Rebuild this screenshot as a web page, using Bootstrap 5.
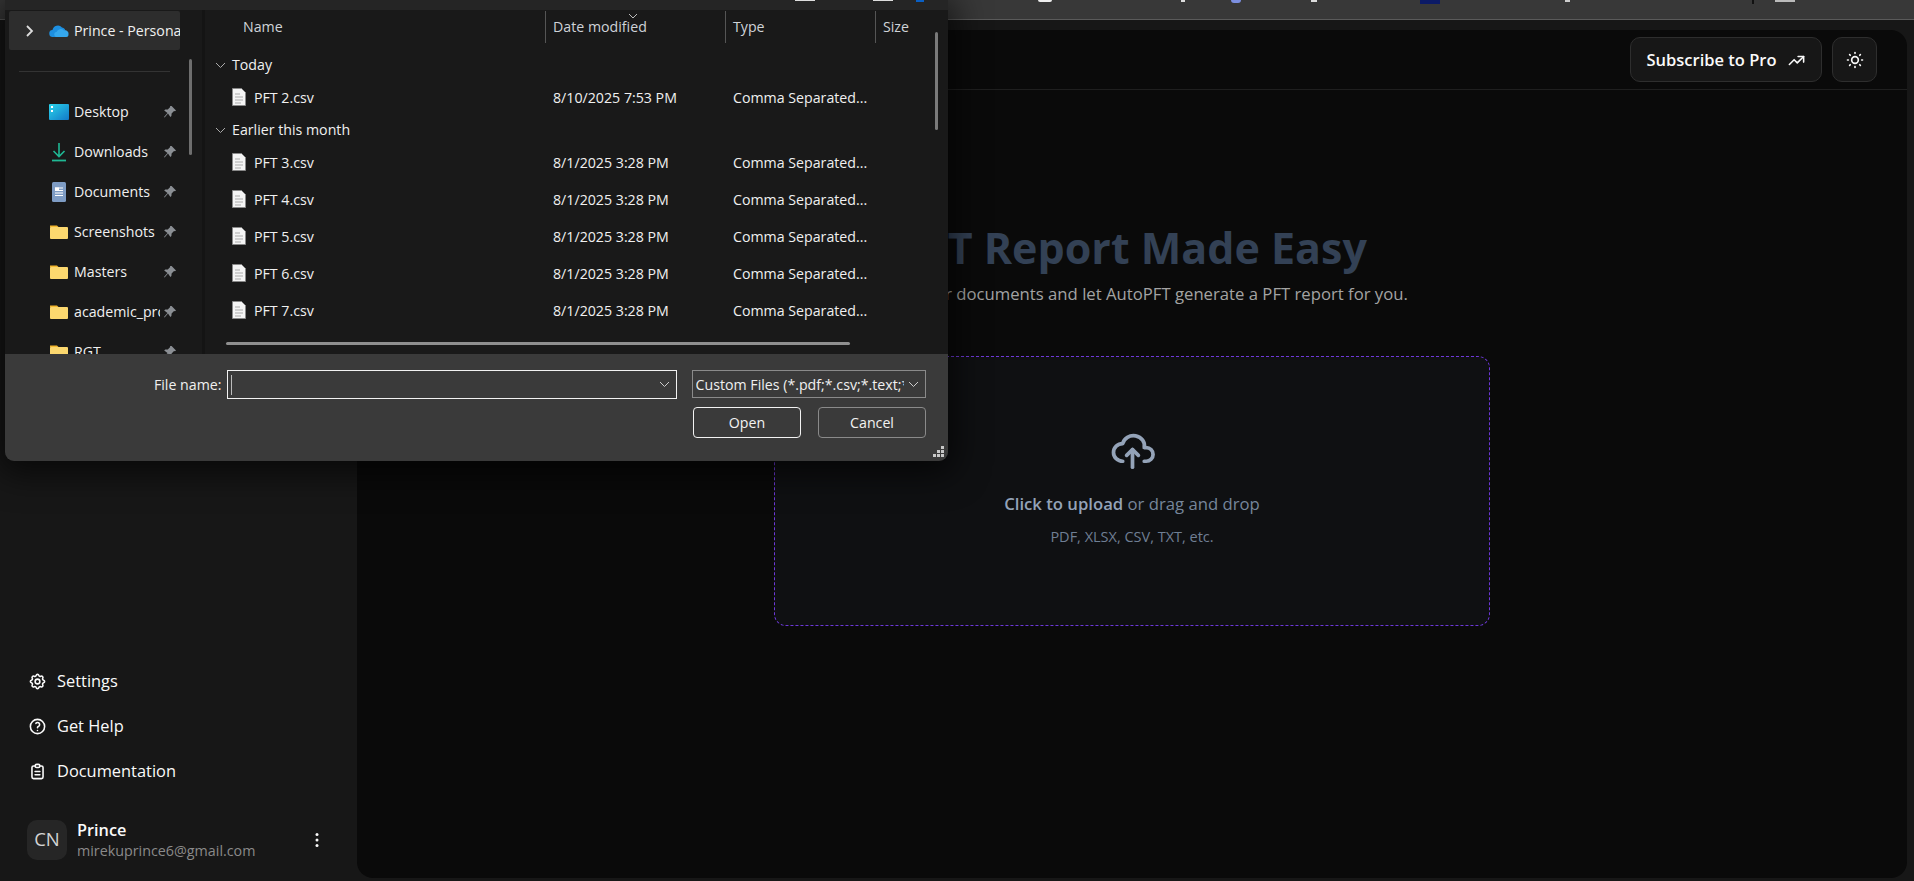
<!DOCTYPE html>
<html lang="en">
<head>
    <meta charset="UTF-8">
    <meta name="viewport" content="width=device-width, initial-scale=1.0">
    <title>AutoPFT</title>
    <link href="https://cdn.jsdelivr.net/npm/bootstrap@5.3.0/dist/css/bootstrap.min.css" rel="stylesheet">
    <style>
        body {
            background: #171717;
            font-family: "Open Sans", "Noto Sans", sans-serif;
            height: 881px;
            overflow: hidden;
            color: #fafafa;
        }
        /* browser strip at the top, mostly cut off */
        .browser-strip {
            height: 20px;
            background: #383838;
            border-bottom: 1px solid #5a5a5a;
            position: relative;
        }
        .strip-bit {
            position: absolute;
            top: 0;
            height: 2px;
        }
        .app-row {
            height: 861px;
        }
        .side-col {
            width: 357px;
            padding: 0 32px 20px 27px;
        }
        .side-link {
            height: 45px;
            font-size: 16.4px;
            gap: 10px;
            padding-left: 1px;
            color: #fafafa;
        }
        .side-link svg {
            width: 19px;
            height: 19px;
        }
        .user-row {
            margin-top: 24px;
        }
        .user-avatar {
            width: 40px;
            height: 40px;
            border-radius: 10px;
            background: #262626;
            color: #d4d4d4;
            font-size: 18.5px;
            padding-bottom: 2px;
        }
        .user-info {
            margin-left: 10px;
            padding-top: 2px;
        }
        .user-name {
            font-size: 16.3px;
            font-weight: 600;
            line-height: 20px;
        }
        .user-mail {
            font-size: 14.3px;
            color: #8a8a8a;
            line-height: 21px;
        }
        .main-panel {
            margin: 10px 7px 3px 0;
            background: #0a0a0a;
            border-radius: 16px;
        }
        .panel-top {
            height: 60px;
            border-bottom: 1px solid #1f1f1f;
            padding: 7px 30px 0 0;
            gap: 10px;
        }
        .top-btn {
            height: 45px;
            background: #171717;
            border: 1px solid #2e2e2e;
            border-radius: 10px;
            color: #fafafa;
            font-weight: 600;
            font-size: 16.5px;
        }
        .top-btn:hover {
            background: #171717;
            color: #fafafa;
        }
        .btn-sub {
            width: 192px;
            gap: 10px;
            padding: 2px 0 0 0;
        }
        .btn-theme {
            width: 45px;
            padding: 0;
        }
        .hero-title {
            margin: 133px 0 0 0;
            font-size: 43px;
            line-height: 50px;
            font-weight: 700;
            color: #334155;
        }
        .hero-sub {
            margin: 8px 0 0 0;
            font-size: 16.7px;
            line-height: 26px;
            color: #a3a3a3;
        }
        .drop-box {
            width: 716px;
            height: 270px;
            margin: 49px auto 0 auto;
            background: #0f1012;
            border: 1px dashed #6d38d8;
            border-radius: 12px;
            padding-top: 69px;
        }
        .drop-main {
            font-size: 16.7px;
            line-height: 26px;
            margin-top: 18px;
            color: #76869b;
        }
        .drop-main b {
            font-weight: 600;
            color: #94a3b8;
        }
        .drop-note {
            font-size: 14.5px;
            line-height: 20px;
            margin-top: 10px;
            color: #6f7f94;
        }
        /* windows file picker floating over the page */
        .file-dialog {
            position: absolute;
            left: 5px;
            top: 0;
            width: 943px;
            height: 461px;
            background: #191919;
            border-radius: 0 0 9px 9px;
            box-shadow: 0 6px 34px 6px rgba(0, 0, 0, .65);
            font-size: 14.2px;
            color: #f0f0f0;
            overflow: hidden;
        }
        .dlg-title {
            height: 10px;
            background: #252525;
            position: relative;
        }
        .dlg-body {
            height: 344px;
        }
        .dlg-nav {
            width: 200px;
            flex: none;
            border-right: 3px solid #141414;
            position: relative;
            overflow: hidden;
        }
        .nav-sel {
            width: 171px;
            height: 39px;
            margin: 1px 0 0 4px;
            background: #2d2d2d;
            border-radius: 2px;
            padding-left: 16px;
            white-space: nowrap;
            overflow: hidden;
        }
        .nav-chev {
            flex: none;
            margin-right: 14px;
        }
        .nav-cloud {
            flex: none;
            margin-right: 5px;
        }
        .nav-line {
            height: 1px;
            width: 151px;
            background: #333;
            margin: 21px 0 20px 14px;
        }
        .nav-item {
            height: 40px;
            padding-left: 44px;
            position: relative;
        }
        .nav-icon {
            width: 20px;
            height: 20px;
            flex: none;
            margin-right: 5px;
        }
        .nav-text {
            width: 86px;
            overflow: hidden;
            white-space: nowrap;
        }
        .nav-pin {
            width: 14px;
            height: 14px;
            margin-left: 3px;
        }
        .nav-thumb {
            position: absolute;
            left: 184px;
            top: 49px;
            width: 3px;
            height: 96px;
            border-radius: 2px;
            background: #6e6e6e;
        }
        .dlg-files {
            position: relative;
            overflow: hidden;
        }
        .col-head {
            height: 41px;
            padding-top: 1px;
            color: #cfd3d8;
        }
        .head-cell {
            height: 32px;
            padding-left: 7px;
            border-left: 1px solid #555;
            position: relative;
        }
        .head-name {
            width: 340px;
            height: 32px;
            padding-left: 38px;
        }
        .sort-mark {
            position: absolute;
            left: 82px;
            top: 2px;
            width: 10px;
            height: 6px;
        }
        .group-row {
            height: 28px;
            padding-left: 10px;
            gap: 6px;
        }
        .file-row {
            height: 37px;
            padding-left: 27px;
        }
        .file-name {
            width: 321px;
            gap: 8px;
        }
        .file-date {
            width: 180px;
        }
        .h-thumb {
            width: 624px;
            height: 3px;
            margin: 13px 0 0 21px;
            background: #8f8f8f;
            border-radius: 2px;
        }
        .v-thumb {
            position: absolute;
            left: 730px;
            top: 22px;
            width: 3px;
            height: 98px;
            border-radius: 2px;
            background: #7a7a7a;
        }
        .dlg-foot {
            height: 107px;
            background: #3a3a3a;
            padding: 16px 22px 0 0;
            position: relative;
        }
        .foot-label {
            width: 217px;
            height: 29px;
            padding-top: 1px;
            text-align: right;
        }
        .foot-input {
            width: 451px;
            height: 29px;
            margin-left: 5px;
            border: 1px solid #f2f2f2;
            padding: 0 6px 0 3px;
        }
        .foot-caret {
            width: 1px;
            height: 20px;
            background: #bbb;
        }
        .foot-select {
            width: 235px;
            height: 28px;
            margin-left: 15px;
            border: 1px solid #8a8a8a;
            padding: 1px 6px 0 3px;
            white-space: nowrap;
        }
        .select-clip {
            width: 208px;
            overflow: hidden;
        }
        .foot-btns {
            margin-top: 8px;
            gap: 17px;
        }
        .dlg-btn {
            width: 108px;
            height: 31px;
            padding: 2px 0 0 0;
            font-size: 14.2px;
            line-height: 1;
            color: #f2f2f2;
            background: #3a3a3a;
            border: 1px solid #8a8a8a;
            border-radius: 4px;
        }
        .dlg-btn-main {
            border-color: #f2f2f2;
        }
        .resize-grip {
            position: absolute;
            right: 3px;
            bottom: 3px;
            width: 12px;
            height: 12px;
        }
    </style>
</head>
<body>
    <div class="browser-strip">
        <span class="strip-bit" style="left:1038px;width:14px;background:#eee;border-radius:0 0 7px 7px"></span>
        <span class="strip-bit" style="left:1181px;width:4px;background:#ddd"></span>
        <span class="strip-bit" style="left:1231px;width:10px;height:3px;background:#7c8fe0;border-radius:0 0 5px 5px"></span>
        <span class="strip-bit" style="left:1311px;width:6px;background:#ddd"></span>
        <span class="strip-bit" style="left:1420px;width:20px;height:4px;background:#0c1a66"></span>
        <span class="strip-bit" style="left:1565px;width:5px;background:#ccc"></span>
        <span class="strip-bit" style="left:1752px;width:2px;height:4px;background:#111"></span>
        <span class="strip-bit" style="left:1775px;width:20px;background:#bbb"></span>
    </div>

    <div class="app-row d-flex">
        <!-- Sidebar -->
        <div class="side-col d-flex flex-column justify-content-end">
            <div class="side-link d-flex align-items-center">
                <svg viewBox="0 0 24 24" fill="none" stroke="currentColor" stroke-width="2" stroke-linecap="round" stroke-linejoin="round"><path d="M10.325 4.317c.426 -1.756 2.924 -1.756 3.35 0a1.724 1.724 0 0 0 2.573 1.066c1.543 -.94 3.31 .826 2.37 2.37a1.724 1.724 0 0 0 1.065 2.572c1.756 .426 1.756 2.924 0 3.35a1.724 1.724 0 0 0 -1.066 2.573c.94 1.543 -.826 3.31 -2.37 2.37a1.724 1.724 0 0 0 -2.572 1.065c-.426 1.756 -2.924 1.756 -3.35 0a1.724 1.724 0 0 0 -2.573 -1.066c-1.543 .94 -3.31 -.826 -2.37 -2.37a1.724 1.724 0 0 0 -1.065 -2.572c-1.756 -.426 -1.756 -2.924 0 -3.35a1.724 1.724 0 0 0 1.066 -2.573c-.94 -1.543 .826 -3.31 2.37 -2.37c1 .608 2.296 .07 2.572 -1.065z"/><circle cx="12" cy="12" r="3"/></svg>
                <span>Settings</span>
            </div>
            <div class="side-link d-flex align-items-center">
                <svg viewBox="0 0 24 24" fill="none" stroke="currentColor" stroke-width="2" stroke-linecap="round" stroke-linejoin="round"><circle cx="12" cy="12" r="9"/><path d="M12 17v.01"/><path d="M12 13.5a1.5 1.5 0 0 1 1 -1.5a2.6 2.6 0 1 0 -3 -4"/></svg>
                <span>Get Help</span>
            </div>
            <div class="side-link d-flex align-items-center">
                <svg viewBox="0 0 24 24" fill="none" stroke="currentColor" stroke-width="2" stroke-linecap="round" stroke-linejoin="round"><path d="M9 5h-2a2 2 0 0 0 -2 2v12a2 2 0 0 0 2 2h10a2 2 0 0 0 2 -2v-12a2 2 0 0 0 -2 -2h-2"/><rect x="9" y="3" width="6" height="4" rx="2"/><path d="M9 12h6"/><path d="M9 16h6"/></svg>
                <span>Documentation</span>
            </div>
            <div class="user-row d-flex align-items-center">
                <div class="user-avatar d-flex align-items-center justify-content-center">CN</div>
                <div class="user-info flex-grow-1">
                    <div class="user-name">Prince</div>
                    <div class="user-mail">mirekuprince6@gmail.com</div>
                </div>
                <svg width="16" height="16" viewBox="0 0 16 16" fill="#fafafa"><circle cx="8" cy="2.5" r="1.5"/><circle cx="8" cy="8" r="1.5"/><circle cx="8" cy="13.5" r="1.5"/></svg>
            </div>
        </div>

        <!-- Main panel -->
        <div class="main-panel flex-grow-1">
            <div class="panel-top d-flex justify-content-end align-items-start">
                <button class="btn top-btn btn-sub d-flex align-items-center justify-content-center">
                    <span>Subscribe to Pro</span>
                    <svg width="19" height="19" viewBox="0 0 24 24" fill="none" stroke="currentColor" stroke-width="2" stroke-linecap="round" stroke-linejoin="round"><path d="M3 17l6 -6l4 4l8 -8"/><path d="M14 7h7v7"/></svg>
                </button>
                <button class="btn top-btn btn-theme d-flex align-items-center justify-content-center">
                    <svg width="20" height="20" viewBox="0 0 24 24" fill="none" stroke="currentColor" stroke-width="2" stroke-linecap="round" stroke-linejoin="round"><circle cx="12" cy="12" r="4"/><path d="M3 12h1m8 -9v1m8 8h1m-9 8v1m-6.4 -15.4l.7 .7m12.1 -.7l-.7 .7m0 11.4l.7 .7m-12.1 -.7l-.7 .7"/></svg>
                </button>
            </div>
            <div class="text-center">
                <h1 class="hero-title">PFT Report Made Easy</h1>
                <p class="hero-sub">Upload your documents and let AutoPFT generate a PFT report for you.</p>
                <div class="drop-box">
                    <svg width="47" height="47" viewBox="0 0 24 24" fill="none" stroke="#94a3b8" stroke-width="1.9" stroke-linecap="round" stroke-linejoin="round"><path d="M7 18a4.6 4.4 0 0 1 0 -9a5 4.5 0 0 1 11 2h1a3.5 3.5 0 0 1 0 7h-1"/><path d="M9 15l3 -3l3 3"/><path d="M12 12v9"/></svg>
                    <div class="drop-main"><b>Click to upload</b> or drag and drop</div>
                    <div class="drop-note">PDF, XLSX, CSV, TXT, etc.</div>
                </div>
            </div>
        </div>
    </div>

    <!-- File dialog -->
    <div class="file-dialog">
        <div class="dlg-title">
            <span class="strip-bit" style="left:790px;width:20px;height:1px;background:#ddd"></span>
            <span class="strip-bit" style="left:868px;width:20px;height:1px;background:#ddd"></span>
            <span class="strip-bit" style="left:911px;width:8px;height:2px;background:#0a5fc4"></span>
        </div>
        <div class="dlg-body d-flex">
            <div class="dlg-nav">
                <div class="nav-sel d-flex align-items-center">
                    <svg class="nav-chev" width="10" height="14" viewBox="0 0 10 14" fill="none" stroke="#ddd" stroke-width="1.8"><path d="M2 2l5 5-5 5"/></svg>
                    <svg class="nav-cloud" width="20" height="14" viewBox="0 0 20 14"><path d="M4 13a3.5 3.5 0 0 1-.5-7A5.5 5.5 0 0 1 13 3.5 4 4 0 0 1 16.5 8 2.6 2.6 0 0 1 17 13z" fill="#1d8fe0"/><path d="M8 13a2.5 2.5 0 0 1-.5-5A4.5 4.5 0 0 1 15 6.5a3.4 3.4 0 0 1 4.5 4A2.5 2.5 0 0 1 17 13z" fill="#35a8ee"/></svg>
                    <span>Prince - Personal</span>
                </div>
                <div class="nav-line"></div>
                <div class="nav-item d-flex align-items-center">
                    <svg class="nav-icon" viewBox="0 0 20 20"><defs><linearGradient id="deskBg" x1="0" y1="0" x2="1" y2="1"><stop offset="0" stop-color="#2ad4ea"/><stop offset="1" stop-color="#1278c8"/></linearGradient></defs><rect y="2" width="20" height="16" rx="1" fill="url(#deskBg)"/><rect x="2" y="4" width="2" height="2" fill="#fff"/><rect x="2" y="8" width="2" height="2" fill="#fff"/></svg>
                    <span class="nav-text">Desktop</span>
                    <svg class="nav-pin" viewBox="0 0 14 14" fill="#8b8f94"><path d="M8.6 1l4.4 4.4-1 .8-1-.2-2.4 2.4-.2 2.6-1 1L5 8.6 1.600 12.400 1 12l3.500-4L1.200 5.600l1-1 2.600-.2 2.400-2.400-.2-1z"/></svg>
                </div>
                <div class="nav-item d-flex align-items-center">
                    <svg class="nav-icon" viewBox="0 0 20 20" fill="none" stroke="#1fb894" stroke-width="1.6"><path d="M10 1v13M4.500 9l5.500 5.500L15.500 9"/><path d="M3 18.500h14" stroke-width="1.800"/></svg>
                    <span class="nav-text">Downloads</span>
                    <svg class="nav-pin" viewBox="0 0 14 14" fill="#8b8f94"><path d="M8.6 1l4.4 4.4-1 .8-1-.2-2.4 2.4-.2 2.6-1 1L5 8.6 1.600 12.400 1 12l3.500-4L1.200 5.600l1-1 2.600-.2 2.400-2.400-.2-1z"/></svg>
                </div>
                <div class="nav-item d-flex align-items-center">
                    <svg class="nav-icon" viewBox="0 0 20 20"><rect x="3" width="14" height="20" rx="1.500" fill="#7e9cc4"/><path d="M6 6h8M10 8.500h4M6 11h8M6 13.500h8" stroke="#fff" stroke-width="1"/><rect x="6" y="5.500" width="4" height="3.500" fill="#fff"/></svg>
                    <span class="nav-text">Documents</span>
                    <svg class="nav-pin" viewBox="0 0 14 14" fill="#8b8f94"><path d="M8.6 1l4.4 4.4-1 .8-1-.2-2.4 2.4-.2 2.6-1 1L5 8.6 1.600 12.400 1 12l3.500-4L1.200 5.600l1-1 2.600-.2 2.400-2.400-.2-1z"/></svg>
                </div>
                <div class="nav-item d-flex align-items-center">
                    <svg class="nav-icon" viewBox="0 0 20 20"><path d="M1 3.500h7l2 2H1z" fill="#f5b82e"/><rect x="1" y="5" width="18" height="12" rx="1" fill="#fcd86f"/></svg>
                    <span class="nav-text">Screenshots</span>
                    <svg class="nav-pin" viewBox="0 0 14 14" fill="#8b8f94"><path d="M8.6 1l4.4 4.4-1 .8-1-.2-2.4 2.4-.2 2.6-1 1L5 8.6 1.600 12.400 1 12l3.500-4L1.200 5.600l1-1 2.600-.2 2.400-2.400-.2-1z"/></svg>
                </div>
                <div class="nav-item d-flex align-items-center">
                    <svg class="nav-icon" viewBox="0 0 20 20"><path d="M1 3.500h7l2 2H1z" fill="#f5b82e"/><rect x="1" y="5" width="18" height="12" rx="1" fill="#fcd86f"/></svg>
                    <span class="nav-text">Masters</span>
                    <svg class="nav-pin" viewBox="0 0 14 14" fill="#8b8f94"><path d="M8.6 1l4.4 4.4-1 .8-1-.2-2.4 2.4-.2 2.6-1 1L5 8.6 1.600 12.400 1 12l3.500-4L1.200 5.600l1-1 2.600-.2 2.400-2.400-.2-1z"/></svg>
                </div>
                <div class="nav-item d-flex align-items-center">
                    <svg class="nav-icon" viewBox="0 0 20 20"><path d="M1 3.500h7l2 2H1z" fill="#f5b82e"/><rect x="1" y="5" width="18" height="12" rx="1" fill="#fcd86f"/></svg>
                    <span class="nav-text">academic_projects</span>
                    <svg class="nav-pin" viewBox="0 0 14 14" fill="#8b8f94"><path d="M8.6 1l4.4 4.4-1 .8-1-.2-2.4 2.4-.2 2.6-1 1L5 8.6 1.600 12.400 1 12l3.500-4L1.200 5.600l1-1 2.600-.2 2.400-2.400-.2-1z"/></svg>
                </div>
                <div class="nav-item d-flex align-items-center">
                    <svg class="nav-icon" viewBox="0 0 20 20"><path d="M1 3.500h7l2 2H1z" fill="#f5b82e"/><rect x="1" y="5" width="18" height="12" rx="1" fill="#fcd86f"/></svg>
                    <span class="nav-text">RGT</span>
                    <svg class="nav-pin" viewBox="0 0 14 14" fill="#8b8f94"><path d="M8.6 1l4.4 4.4-1 .8-1-.2-2.4 2.4-.2 2.6-1 1L5 8.6 1.600 12.400 1 12l3.500-4L1.200 5.600l1-1 2.600-.2 2.400-2.400-.2-1z"/></svg>
                </div>
                <div class="nav-thumb"></div>
            </div>

            <div class="dlg-files flex-grow-1">
                <div class="col-head d-flex">
                    <div class="head-name d-flex align-items-center">Name</div>
                    <div class="head-cell d-flex align-items-center" style="width:180px">Date modified
                        <svg class="sort-mark" viewBox="0 0 10 6" fill="none" stroke="#bbb"><path d="M1 1l4 4 4-4"/></svg>
                    </div>
                    <div class="head-cell d-flex align-items-center" style="width:150px">Type</div>
                    <div class="head-cell d-flex align-items-center" style="width:60px">Size</div>
                </div>

                <div class="group-row d-flex align-items-center">
                    <svg width="11" height="7" viewBox="0 0 11 7" fill="none" stroke="#aaa"><path d="M1 1l4.500 4.500L10 1"/></svg>
                    <span>Today</span>
                </div>
                <div class="file-row d-flex align-items-center">
                    <div class="file-name d-flex align-items-center">
                        <svg width="14" height="18" viewBox="0 0 14 18"><path d="M.5.500h9l4 4v13H.5z" fill="#f4f4f4" stroke="#888"/><path d="M3 6h5M3 9h8M3 12h8M3 15h6" stroke="#aaa"/></svg>
                        <span>PFT 2.csv</span>
                    </div>
                    <div class="file-date">8/10/2025 7:53 PM</div>
                    <div>Comma Separated...</div>
                </div>

                <div class="group-row d-flex align-items-center">
                    <svg width="11" height="7" viewBox="0 0 11 7" fill="none" stroke="#aaa"><path d="M1 1l4.500 4.500L10 1"/></svg>
                    <span>Earlier this month</span>
                </div>
                <div class="file-row d-flex align-items-center">
                    <div class="file-name d-flex align-items-center">
                        <svg width="14" height="18" viewBox="0 0 14 18"><path d="M.5.500h9l4 4v13H.5z" fill="#f4f4f4" stroke="#888"/><path d="M3 6h5M3 9h8M3 12h8M3 15h6" stroke="#aaa"/></svg>
                        <span>PFT 3.csv</span>
                    </div>
                    <div class="file-date">8/1/2025 3:28 PM</div>
                    <div>Comma Separated...</div>
                </div>
                <div class="file-row d-flex align-items-center">
                    <div class="file-name d-flex align-items-center">
                        <svg width="14" height="18" viewBox="0 0 14 18"><path d="M.5.500h9l4 4v13H.5z" fill="#f4f4f4" stroke="#888"/><path d="M3 6h5M3 9h8M3 12h8M3 15h6" stroke="#aaa"/></svg>
                        <span>PFT 4.csv</span>
                    </div>
                    <div class="file-date">8/1/2025 3:28 PM</div>
                    <div>Comma Separated...</div>
                </div>
                <div class="file-row d-flex align-items-center">
                    <div class="file-name d-flex align-items-center">
                        <svg width="14" height="18" viewBox="0 0 14 18"><path d="M.5.500h9l4 4v13H.5z" fill="#f4f4f4" stroke="#888"/><path d="M3 6h5M3 9h8M3 12h8M3 15h6" stroke="#aaa"/></svg>
                        <span>PFT 5.csv</span>
                    </div>
                    <div class="file-date">8/1/2025 3:28 PM</div>
                    <div>Comma Separated...</div>
                </div>
                <div class="file-row d-flex align-items-center">
                    <div class="file-name d-flex align-items-center">
                        <svg width="14" height="18" viewBox="0 0 14 18"><path d="M.5.500h9l4 4v13H.5z" fill="#f4f4f4" stroke="#888"/><path d="M3 6h5M3 9h8M3 12h8M3 15h6" stroke="#aaa"/></svg>
                        <span>PFT 6.csv</span>
                    </div>
                    <div class="file-date">8/1/2025 3:28 PM</div>
                    <div>Comma Separated...</div>
                </div>
                <div class="file-row d-flex align-items-center">
                    <div class="file-name d-flex align-items-center">
                        <svg width="14" height="18" viewBox="0 0 14 18"><path d="M.5.500h9l4 4v13H.5z" fill="#f4f4f4" stroke="#888"/><path d="M3 6h5M3 9h8M3 12h8M3 15h6" stroke="#aaa"/></svg>
                        <span>PFT 7.csv</span>
                    </div>
                    <div class="file-date">8/1/2025 3:28 PM</div>
                    <div>Comma Separated...</div>
                </div>
                <div class="h-thumb"></div>
                <div class="v-thumb"></div>
            </div>
        </div>

        <div class="dlg-foot">
            <div class="d-flex align-items-start">
                <div class="foot-label d-flex align-items-center justify-content-end">File name:</div>
                <div class="foot-input d-flex align-items-center justify-content-between">
                    <span class="foot-caret"></span>
                    <svg width="11" height="7" viewBox="0 0 11 7" fill="none" stroke="#ccc"><path d="M1 1l4.500 4.500L10 1"/></svg>
                </div>
                <div class="foot-select d-flex align-items-center justify-content-between">
                    <span class="select-clip">Custom Files (*.pdf;*.csv;*.text;*.txt)</span>
                    <svg width="11" height="7" viewBox="0 0 11 7" fill="none" stroke="#ccc"><path d="M1 1l4.500 4.500L10 1"/></svg>
                </div>
            </div>
            <div class="foot-btns d-flex justify-content-end">
                <button class="btn dlg-btn dlg-btn-main">Open</button>
                <button class="btn dlg-btn">Cancel</button>
            </div>
            <svg class="resize-grip" viewBox="0 0 12 12" fill="#c8c8c8"><rect x="8" y="0" width="3" height="3"/><rect x="4" y="4" width="3" height="3"/><rect x="8" y="4" width="3" height="3"/><rect x="0" y="8" width="3" height="3"/><rect x="4" y="8" width="3" height="3"/><rect x="8" y="8" width="3" height="3"/></svg>
        </div>
    </div>

    <script src="https://cdn.jsdelivr.net/npm/bootstrap@5.3.0/dist/js/bootstrap.bundle.min.js"></script>
</body>
</html>
